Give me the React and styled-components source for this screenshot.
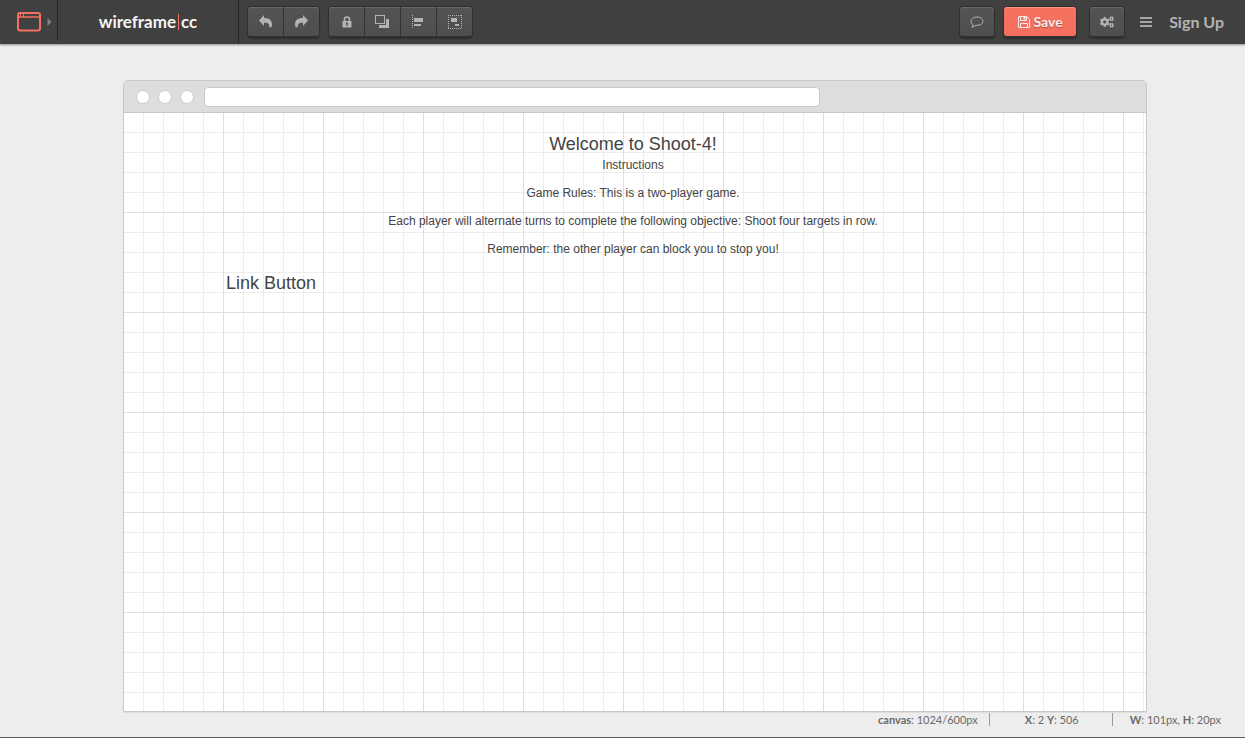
import React from "react";
import styled, { createGlobalStyle, css } from "styled-components";
import { FaCogs } from "react-icons/fa";

const GlobalStyle = createGlobalStyle`
  *, *::before, *::after { box-sizing: border-box; }
  body { margin: 0; background: #ededed; }
  button, input { font: inherit; }
`;

const Page = styled.div`
  display: flex;
  flex-direction: column;
  min-height: 100vh;
  background: #ededed;
  border-bottom: 1px solid #625d5d;
  font-family: Lato, "Liberation Sans", sans-serif;
`;

const TopBar = styled.header`
  display: flex;
  align-items: flex-start;
  height: 44px;
  background: #404040;
  color: #b3b3b3;
  box-shadow: 0 1px 2px rgba(0, 0, 0, 0.4);
`;

const StencilButton = styled.button`
  display: flex;
  align-items: center;
  gap: 6px;
  width: 58px;
  height: 41px;
  padding: 2px 0 0 17px;
  border: 0;
  border-right: 1px solid #282828;
  background: transparent;
`;

const Brand = styled.a`
  display: flex;
  align-items: center;
  justify-content: center;
  gap: 2px;
  width: 181px;
  height: 44px;
  border-right: 1px solid #282828;
  color: #f5f5f5;
  font-size: 17px;
  font-weight: 700;
  line-height: 20px;
  text-decoration: none;
`;

const BrandBar = styled.span`
  width: 1px;
  height: 16px;
  background: #f4705f;
`;

const Tools = styled.nav`
  display: flex;
  gap: 8px;
  padding: 6px 0 0 8px;
`;

const ButtonGroup = styled.div`
  display: flex;
  border: 1px solid #2f2f2f;
  border-radius: 4px;
  box-shadow: 0 2px 1px rgba(0, 0, 0, 0.25);
`;

const tones = {
  dark: css`
    background: linear-gradient(#545454, #4e4e4e);
    color: #b3b3b3;
    box-shadow: inset 0 1px 0 #696969;
  `,
  accent: css`
    background: #f4705f;
    color: #fbeae7;
    box-shadow: inset 0 1px 0 #ff9080;
    text-shadow: 0 1px 1px rgba(0, 0, 0, 0.3);
  `,
};

const ToolButton = styled.button`
  display: flex;
  align-items: center;
  justify-content: center;
  gap: 4px;
  width: 36px;
  height: 29px;
  padding: 0;
  border: 0;
  border-right: 1px solid #333;
  font-size: 14px;
  line-height: 16px;
  font-weight: 700;
  ${(p) => tones[p.$tone || "dark"]}

  &:first-child { border-radius: 3px 0 0 3px; }
  &:last-child { border-right: 0; border-radius: 0 3px 3px 0; width: 35px; }
  &:only-child { border-radius: 3px; width: ${(p) => (p.$wide ? 72 : 34)}px; }
`;

const Account = styled.nav`
  display: flex;
  align-items: flex-start;
  gap: 8px;
  margin-left: auto;
  padding: 6px 21px 0 0;
`;

const AccountMenu = styled.div`
  display: flex;
  align-items: flex-start;
  gap: 15px;
  margin-left: 4px;
`;

const MenuButton = styled.button`
  display: flex;
  align-items: center;
  height: 32px;
  padding: 0;
  border: 0;
  background: none;
`;

const SignUp = styled.a`
  margin-left: 2px;
  color: #b3b3b3;
  font-size: 16px;
  font-weight: 700;
  line-height: 32px;
  text-decoration: none;
`;

const Workspace = styled.main`
  display: flex;
  flex: 1;
  flex-direction: column;
  padding: 36px 98px 0 123px;
`;

const BrowserFrame = styled.section`
  display: flex;
  flex: 1;
  flex-direction: column;
  border: 1px solid #c8c8c8;
  border-radius: 5px 5px 0 0;
  box-shadow: 0 1px 0 #dedede;
  overflow: hidden;
`;

const BrowserBar = styled.div`
  display: flex;
  align-items: center;
  gap: 8px;
  height: 32px;
  padding-left: 12px;
  border-bottom: 1px solid #c8c8c8;
  background: #ddd;
`;

const Dot = styled.span`
  width: 14px;
  height: 14px;
  border: 1px solid #ccc;
  border-radius: 50%;
  background: #fff;
`;

const AddressBox = styled.input`
  width: 61%;
  height: 20px;
  margin: 1px 0 0 2px;
  padding: 0 8px;
  border: 1px solid #c8c8c8;
  border-radius: 4px;
  background: #fff;
`;

const Canvas = styled.article`
  flex: 1;
  padding: 21px 4px 0 0;
  background-color: #fff;
  background-image:
    linear-gradient(to left, #dfdfdf 1px, transparent 1px),
    linear-gradient(to top, #dfdfdf 1px, transparent 1px),
    linear-gradient(to left, #ededed 1px, transparent 1px),
    linear-gradient(to top, #ededed 1px, transparent 1px);
  background-size: 100px 100px, 100px 100px, 20px 20px, 20px 20px;
  color: #444;
  font-family: "Liberation Sans", Arial, sans-serif;
  text-align: center;
`;

const Title = styled.h1`
  margin: 0 0 4px;
  font-size: 18px;
  font-weight: 400;
  line-height: 20px;
`;

const Line = styled.p`
  margin: 0 0 14px;
  font-size: 12px;
  line-height: 14px;
`;

const LinkButton = styled.a`
  display: block;
  width: max-content;
  margin: 17px 0 0 102px;
  color: #444;
  font-size: 18px;
  line-height: 20px;
  text-decoration: none;
`;

const StatusBar = styled.footer`
  display: flex;
  justify-content: flex-end;
  height: 25px;
  padding: 1px 24px 0 0;
  color: #6a6a6a;
  font-size: 11px;
  line-height: 14px;
`;

const Status = styled.div`
  height: 13px;
  padding: 0 ${(p) => p.$end}px 0 ${(p) => p.$start}px;

  & + & { border-left: 1px solid #999; }
`;

const Svg = ({ w, h, children }) => (
  <svg width={w} height={h} viewBox={`0 0 ${w} ${h}`} fill="currentColor" aria-hidden="true">
    {children}
  </svg>
);

const arrow = "M5 0V3C10 3 13 5 13 9.500C13 10.500 12.700 11.400 12.300 12.200H10.300C10.600 9 9 7.600 5 7.700V11L0 5.500Z";

const WindowIcon = () => (
  <Svg w={24} h={20}>
    <rect x="1" y="1" width="22" height="17.500" rx="2" fill="none" stroke="#f4705f" strokeWidth="2" />
    <path d="M1 5H23" stroke="#f4705f" strokeWidth="1.500" />
    <path d="M3.500 1V5M6.500 1V5" stroke="#f4705f" />
  </Svg>
);

const UndoIcon = () => <Svg w={13} h={13}><path d={arrow} /></Svg>;
const RedoIcon = () => (
  <Svg w={13} h={13}><path transform="translate(13 0) scale(-1 1)" d={arrow} /></Svg>
);

const LockIcon = () => (
  <Svg w={10} h={12}>
    <path d="M2.500 6V3.500A2.500 2.500 0 0 1 7.500 3.500V6" fill="none" stroke="currentColor" strokeWidth="1.600" />
    <rect x="0.500" y="5" width="9" height="6.500" rx="0.500" />
    <path d="M5 6.500V10M4 7.500H6" stroke="#505050" strokeWidth="1.200" />
  </Svg>
);

const LayersIcon = () => (
  <Svg w={15} h={13}>
    <path d="M11 4H14V13H4V10H11Z" />
    <rect x="0.500" y="0.500" width="9" height="8" fill="none" stroke="currentColor" />
  </Svg>
);

const AlignIcon = () => (
  <Svg w={13} h={14}>
    <path d="M0.500 0V14" stroke="currentColor" strokeDasharray="1 1" />
    <path d="M2 3H11V7H2ZM2 9H9V11H2Z" />
  </Svg>
);

const GroupIcon = () => (
  <Svg w={14} h={14}>
    <path d="M0 0.500H14M0 13.500H14M0.500 0V14M13.500 0V14" stroke="currentColor" strokeDasharray="1 1" />
    <path d="M3 3H9V7H3ZM7 9H11V11H7Z" />
  </Svg>
);

const CommentIcon = () => (
  <Svg w={14} h={12}>
    <path
      d="M7 1C10.400 1 13 2.800 13 5.200S10.400 9.400 7 9.400C6.600 9.400 6.200 9.400 5.800 9.300C4.800 10.300 3.400 11 1.800 11.200C2.500 10.500 2.900 9.700 3 8.600C1.700 7.800 1 6.600 1 5.200C1 2.800 3.600 1 7 1Z"
      fill="none"
      stroke="currentColor"
    />
  </Svg>
);

const FloppyIcon = () => (
  <Svg w={12} h={12}>
    <path
      d="M0.500 1Q0.500 0.500 1 0.500H8.700L11.500 3.300V11Q11.500 11.500 11 11.500H1Q0.500 11.500 0.500 11ZM2.500 0.500V4.500H8.500V0.500M2.500 11.500V7.500H9.500V11.500"
      fill="none"
      stroke="currentColor"
    />
    <path d="M5.500 1H7.500V3.500H5.500Z" />
  </Svg>
);

const MenuIcon = () => (
  <Svg w={12} h={10}>
    <path d="M0 0H12V2H0ZM0 4H12V6H0ZM0 8H12V10H0Z" fill="#a6a6a6" />
  </Svg>
);

const editTools = [
  ["Lock", LockIcon],
  ["Arrange", LayersIcon],
  ["Align", AlignIcon],
  ["Group", GroupIcon],
];

const instructions = [
  "Instructions",
  "Game Rules: This is a two-player game.",
  "Each player will alternate turns to complete the following objective: Shoot four targets in row.",
  "Remember: the other player can block you to stop you!",
];

export default function App() {
  return (
    <Page>
      <GlobalStyle />
      <TopBar>
        <StencilButton type="button" aria-label="Choose canvas">
          <WindowIcon />
          <Svg w={5} h={8}><path d="M0.500 0L4.500 4L0.500 8Z" fill="#808080" /></Svg>
        </StencilButton>
        <Brand href="#">wireframe<BrandBar />cc</Brand>
        <Tools aria-label="Editing">
          <ButtonGroup>
            <ToolButton type="button" aria-label="Undo"><UndoIcon /></ToolButton>
            <ToolButton type="button" aria-label="Redo"><RedoIcon /></ToolButton>
          </ButtonGroup>
          <ButtonGroup>
            {editTools.map(([label, Icon]) => (
              <ToolButton key={label} type="button" aria-label={label}><Icon /></ToolButton>
            ))}
          </ButtonGroup>
        </Tools>
        <Account aria-label="Account">
          <ButtonGroup>
            <ToolButton type="button" aria-label="Comments"><CommentIcon /></ToolButton>
          </ButtonGroup>
          <ButtonGroup>
            <ToolButton $wide $tone="accent" type="button"><FloppyIcon />Save</ToolButton>
          </ButtonGroup>
          <AccountMenu>
            <ButtonGroup>
              <ToolButton type="button" aria-label="Settings"><FaCogs size={14} /></ToolButton>
            </ButtonGroup>
            <MenuButton type="button" aria-label="Menu"><MenuIcon /></MenuButton>
            <SignUp href="#">Sign Up</SignUp>
          </AccountMenu>
        </Account>
      </TopBar>
      <Workspace>
        <BrowserFrame>
          <BrowserBar>
            <Dot /><Dot /><Dot />
            <AddressBox type="text" aria-label="Address" />
          </BrowserBar>
          <Canvas>
            <Title>Welcome to Shoot-4!</Title>
            {instructions.map((text) => <Line key={text}>{text}</Line>)}
            <LinkButton href="#">Link Button</LinkButton>
          </Canvas>
        </BrowserFrame>
      </Workspace>
      <StatusBar>
        <Status $start={0} $end={11}><b>canvas</b>: 1024/600px</Status>
        <Status $start={35} $end={33}><b>X</b>: 2 <b>Y</b>: 506</Status>
        <Status $start={17} $end={0}><b>W</b>: 101px, <b>H</b>: 20px</Status>
      </StatusBar>
    </Page>
  );
}
